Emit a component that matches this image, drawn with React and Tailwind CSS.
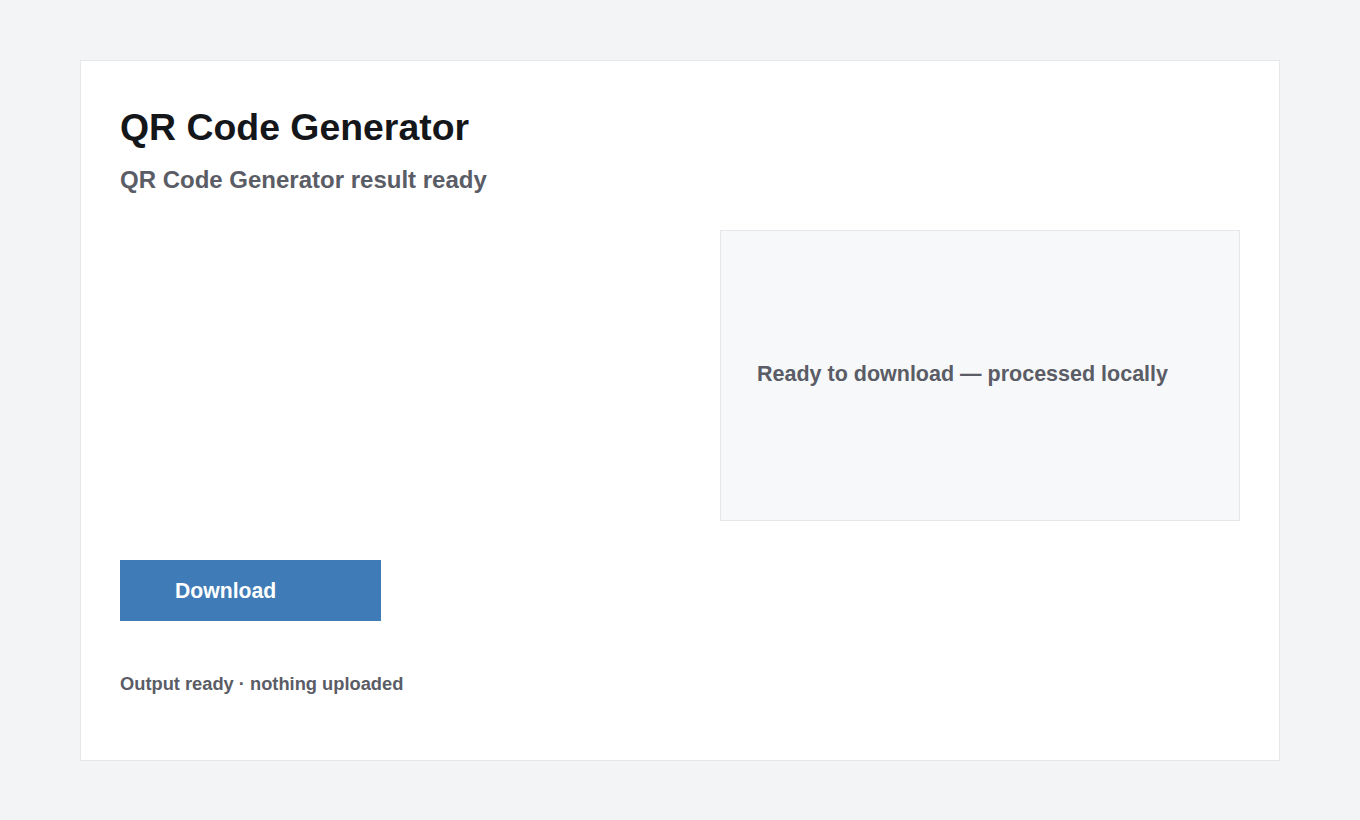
export default function App() {
    return (
        <div className="min-h-screen bg-[#f3f4f6] px-20 pt-[60px] pb-[60px]" style={{ fontFamily: '"Liberation Sans", Arial, sans-serif' }}>
            <div className="h-[701px] bg-white border border-[#e5e7eb] px-[39px] pt-[48px]">
                {/* Header */}
                <h1 className="text-[37.4px] leading-none font-bold text-[#15161a]">QR Code Generator</h1>
                <p className="mt-[22px] text-[24px] leading-none font-bold text-[#5a5c66]">QR Code Generator result ready</p>

                {/* Result area */}
                <div className="mt-[38px] grid grid-cols-[560px_1fr] gap-10">
                    <div />
                    <div className="h-[291px] flex items-center px-9 pb-[3px] bg-[#f7f8fa] border border-[#e5e7eb]">
                        <span className="text-[21.5px] font-bold text-[#5a5c66]">Ready to download — processed locally</span>
                    </div>
                </div>

                <button className="mt-[39px] w-[261px] h-[61px] pl-[55px] text-left bg-[#3f7bb6] text-white text-[21.2px] font-bold">
                    Download
                </button>

                <p className="mt-[54px] text-[18.3px] leading-none font-bold text-[#5a5c66]">Output ready · nothing uploaded</p>
            </div>
        </div>
    );
}
